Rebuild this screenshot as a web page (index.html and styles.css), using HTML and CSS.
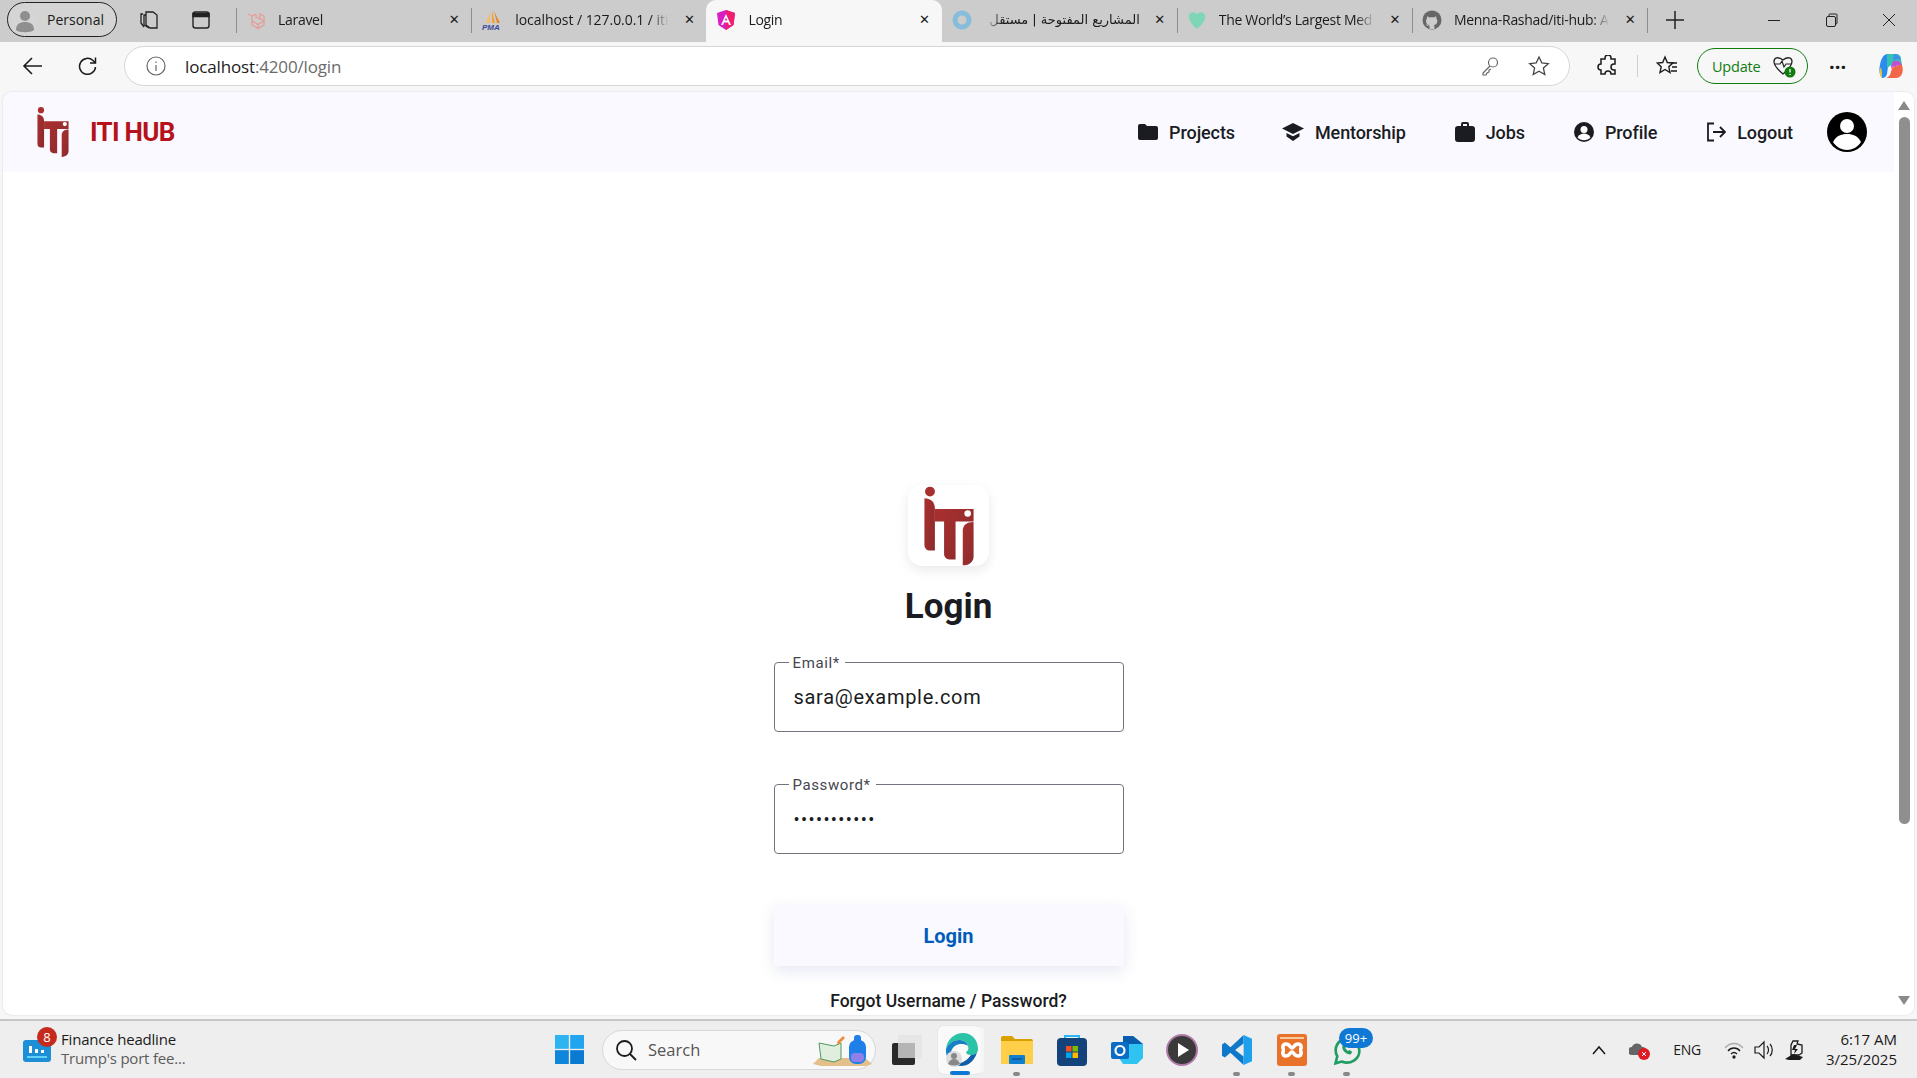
FILE: index.html

```html
<!DOCTYPE html>
<html lang="en">
<head>
  <meta charset="UTF-8" />
  <title>Login</title>
  <link rel="stylesheet" href="styles.css">
</head>
<body>

  <svg class="defs" width="0" height="0">
    <defs>
      <linearGradient id="rojo" x1="0" y1="0" x2="1" y2="1">
        <stop offset="0" stop-color="#a9302f"/>
        <stop offset="1" stop-color="#8c2a2c"/>
      </linearGradient>
      <symbol id="logo" viewBox="0 0 164 244">
        <circle cx="24" cy="17" r="15" fill="#a8302f"/>
        <path d="M7 37c18 0 32 10 32 33v127H24c-10 0-17-8-17-18z" fill="url(#rojo)"/>
        <path d="M39 70h118v38h-55v116H84c-10 0-17-7-17-17V108H39z" fill="url(#rojo)"/>
        <circle cx="139" cy="84" r="10" fill="#fff"/>
        <path d="M157 110v104c0 16-12 28-33 28V136c0-16 12-26 33-26z" fill="url(#rojo)"/>
      </symbol>
    </defs>
  </svg>

  <!-- PESTAÑAS -->
  <div class="tabbar">
    <div class="profile">
      <svg width="26" height="26" viewBox="0 0 26 26"><circle cx="13" cy="13" r="13" fill="#d5d5d5"/><circle cx="13" cy="9" r="5" fill="#8f8f8f"/><path d="M4 23c0-6 4-8 9-8s9 2 9 8c-3 3-15 3-18 0z" fill="#8f8f8f"/></svg>
      <span>Personal</span>
    </div>
    <div class="tool-icon first">
      <svg width="22" height="22" viewBox="0 0 22 22" fill="none" stroke="#222" stroke-width="1.3"><path d="M8 3h7l4 3v13h-7l-4-3z"/><path d="M8 6H6v10l5 3"/><path d="M5 5H3v9l3 4"/></svg>
    </div>
    <div class="tool-icon last">
      <svg width="20" height="20" viewBox="0 0 20 20" fill="none" stroke="#222" stroke-width="1.4"><rect x="2" y="2" width="16" height="16" rx="2.5"/><path d="M2 3.5h16v3H2z" fill="#222"/></svg>
    </div>

    <div class="tab sep">
      <svg class="fav" width="20" height="20" viewBox="0 0 20 20" fill="none" stroke="#e79a94" stroke-width="1.2"><path d="M2 4l4 2v9l6 3.5 6-3.500v-4l-6 3.500-6-3.500M6 6l4-2M12 18.500v-4M14 4l4 2v5l-4-2V4zM14 9l-4-2V4"/></svg>
      <span class="tab-title">Laravel</span>
      <span class="tab-x">✕</span>
    </div>
    <div class="tab sep">
      <svg class="fav" width="22" height="22" viewBox="0 0 22 22"><path d="M11 1l3 13h-3z" fill="#f2a23a"/><path d="M9 3L5 14h4z" fill="#f6bd6a"/><path d="M13 2l6 12h-3z" fill="#e9862a"/><text class="pma" x="1" y="21">PMA</text></svg>
      <span class="tab-title wide">localhost / 127.0.0.1 / iti</span>
      <span class="tab-x">✕</span>
    </div>
    <div class="tab active">
      <svg class="fav" width="20" height="22" viewBox="0 0 20 22"><path d="M10 1l9 3-1.500 12L10 21l-7.500-5L1 4z" fill="#d91fc3"/><path d="M10 1l9 3-1.500 12L10 21z" fill="#f0206e"/><path d="M10 5l5 11h-2l-1-2.500H8L7 16H5zM8.800 11.500h2.400L10 8.500z" fill="#fff"/></svg>
      <span class="tab-title">Login</span>
      <span class="tab-x">✕</span>
    </div>
    <div class="tab sep no-line">
      <svg class="fav" width="20" height="20" viewBox="0 0 20 20"><circle cx="10" cy="10" r="7" fill="none" stroke="#86bcdc" stroke-width="5"/></svg>
      <span class="tab-title rtl" dir="rtl">المشاريع المفتوحة | مستقل</span>
      <span class="tab-x">✕</span>
    </div>
    <div class="tab sep">
      <svg class="fav" width="20" height="20" viewBox="0 0 20 20"><path d="M10 19C4 14 1 9 2 5c1-3 5-4 8-1 3-3 7-2 8 1 1 4-2 9-8 14z" fill="#7fd6b7"/></svg>
      <span class="tab-title">The World’s Largest Med</span>
      <span class="tab-x">✕</span>
    </div>
    <div class="tab sep">
      <svg class="fav" width="20" height="20" viewBox="0 0 20 20"><circle cx="10" cy="10" r="9.500" fill="#666"/><path d="M7.500 19v-3c-2.500.5-3-1-3.500-2 1 0 1.500 1 2 1.500.7.600 1.200 0 1.500-.5-2-.3-3.500-1.300-3.500-4 0-1 .4-1.800 1-2.400-.2-.6-.2-1.400.1-2.100 1 0 1.800.6 2.300 1 1.500-.4 3-.4 4.500 0 .6-.4 1.300-1 2.300-1 .3.700.3 1.500.1 2.100.6.600 1 1.400 1 2.400 0 2.700-1.500 3.700-3.500 4 .4.500.6 1 .6 1.700V19z" fill="#ccc"/></svg>
      <span class="tab-title">Menna-Rashad/iti-hub: A</span>
      <span class="tab-x">✕</span>
    </div>
    <div class="new-tab sep">
      <svg width="18" height="18" viewBox="0 0 18 18" stroke="#222" stroke-width="1.500"><path d="M9 0v18M0 9h18"/></svg>
    </div>
    <div class="win-btns">
      <svg width="14" height="14" viewBox="0 0 14 14" stroke="#222"><path d="M1 7.500h12"/></svg>
      <svg width="14" height="14" viewBox="0 0 14 14" fill="none" stroke="#222"><rect x="1.500" y="3.500" width="9" height="10" rx="1.500"/><path d="M4 3.500V2q0-1 1-1h6q1 0 1 1v8q0 1-1 1h-.5"/></svg>
      <svg width="14" height="14" viewBox="0 0 14 14" stroke="#222"><path d="M1 1l12 12M13 1L1 13"/></svg>
    </div>
  </div>

  <!-- BARRA DE DIRECCIONES -->
  <div class="toolbar">
    <svg class="btn-back" width="22" height="22" viewBox="0 0 22 22" fill="none" stroke="#1b1b1b" stroke-width="1.600"><path d="M20 11H2M10 3l-8 8 8 8"/></svg>
    <svg class="btn-reload" width="22" height="22" viewBox="0 0 22 22" fill="none" stroke="#1b1b1b" stroke-width="1.500"><path d="M18.500 12a8 8 0 1 1-2.500-6.500l2.500 2.500"/><path d="M18.500 2.500V8H13"/></svg>
    <div class="address">
      <svg class="info" width="20" height="20" viewBox="0 0 20 20" fill="none" stroke="#666" stroke-width="1.200"><circle cx="10" cy="10" r="9"/><path d="M10 9v6M10 5.500v1.500"/></svg>
      <span class="url">localhost<span class="url-dim">:4200/login</span></span>
      <span class="spacer"></span>
      <svg width="20" height="20" viewBox="0 0 20 20" fill="none" stroke="#666" stroke-width="1.200"><circle cx="13" cy="6.500" r="4.500"/><path d="M10 10l-7 7v2h3l1-2 2-1v-2l2-1"/></svg>
      <svg width="22" height="22" viewBox="0 0 22 22" fill="none" stroke="#444" stroke-width="1.300"><path d="M11 2l2.800 6 6.500.7-4.900 4.400 1.400 6.400-5.800-3.300-5.800 3.300 1.400-6.400L1.700 8.700 8.200 8z"/></svg>
    </div>
    <svg class="tb-ext" width="22" height="22" viewBox="0 0 22 22" fill="none" stroke="#1b1b1b" stroke-width="1.500"><path d="M8 3a3 3 0 0 1 6 0v1h4v5h-1a3 3 0 0 0 0 6h1v4h-4a3 3 0 0 0-6 0H4v-4a3 3 0 0 1 0-6V4h4z"/></svg>
    <span class="tb-divider"></span>
    <svg class="tb-fav" width="22" height="22" viewBox="0 0 22 22" fill="none" stroke="#1b1b1b" stroke-width="1.400"><path d="M9 2l2.300 5.500 5.500.5-4 3.800 1.200 5.700L9 14.500l-5 3 1.200-5.700-4-3.800 5.500-.5z"/><path d="M15 8h6M16 12h5M15 16h6"/></svg>
    <div class="update">
      <span>Update</span>
      <svg width="24" height="24" viewBox="0 0 24 24" fill="none"><path d="M11 20C5 15 2 11 2 7.500 2 4 6 2 11 6c5-4 9-2 9 1.500S17 15 11 20z" stroke="#222" stroke-width="1.300"/><path d="M3 10h5l2-3 2 6 2-3h5" stroke="#222" stroke-width="1.200"/><circle cx="18" cy="18" r="5.500" fill="#107c10"/><path d="M18 15v3.500M18 20v1" stroke="#fff" stroke-width="1.300"/></svg>
    </div>
    <span class="tb-dots">···</span>
    <svg class="tb-copilot" width="28" height="28" viewBox="0 0 28 28"><path d="M9 2h8c-4 2-6 6-7 13l-1 7c-1 3-3 4-5 4-3-4-3-9-2-13C3 7 5 3 9 2z" fill="#2a8cf0"/><path d="M3 15c1 4 1 7 1 11-3-4-3-7-1-11z" fill="#e9c93a"/><path d="M9 2h9c3 0 5 2 5 5l1 6h-8c-4 0-6 2-7 4z" fill="#35c2b0"/><path d="M24 13c2 6 0 13-6 13H6c4 0 6-2 7-6 1-5 3-7 11-7z" fill="#f2674a"/><path d="M16 9c4-1 6 0 8 4-4 0-9 1-11 4 0-4 1-7 3-8z" fill="#c24fd6"/><path d="M16 2c3 0 6 2 7 6-3-2-6-1-8 1z" fill="#3f8ef2"/></svg>
  </div>

  <!-- PÁGINA -->
  <div class="viewport">
    <div class="page">
      <nav class="navbar">
        <div class="brand">
          <svg class="brand-logo" width="34" height="52"><use href="#logo"/></svg>
          <span class="brand-name">ITI HUB</span>
        </div>
        <div class="nav-links">
          <a class="nav-item">
            <svg width="20" height="16" viewBox="0 0 20 16" fill="#1a1c22"><path d="M0 2Q0 0 2 0h5l2 2h9q2 0 2 2v10q0 2-2 2H2q-2 0-2-2z"/></svg>
            Projects
          </a>
          <a class="nav-item">
            <svg width="22" height="18" viewBox="0 0 22 18" fill="#1a1c22"><path d="M11 0l11 5.500L11 11 0 5.500z"/><path d="M4.500 10v3.500l6.500 4.500 6.500-4.500V10L11 13.300z"/></svg>
            Mentorship
          </a>
          <a class="nav-item">
            <svg width="20" height="20" viewBox="0 0 20 20" fill="#1a1c22"><path d="M6 4V2q0-2 2-2h4q2 0 2 2v2h3q3 0 3 3v10q0 3-3 3H3q-3 0-3-3V7q0-3 3-3zm2 0h4V2H8z"/></svg>
            Jobs
          </a>
          <a class="nav-item">
            <svg width="20" height="20" viewBox="0 0 20 20"><circle cx="10" cy="10" r="10" fill="#1a1c22"/><circle cx="10" cy="7.500" r="3.500" fill="#fff"/><path d="M3.500 15.500c1.500-3 4-4 6.500-4s5 1 6.500 4c-3.500 3.500-9.500 3.500-13 0z" fill="#fff"/></svg>
            Profile
          </a>
          <a class="nav-item">
            <svg width="20" height="20" viewBox="0 0 20 20" fill="none" stroke="#1a1c22" stroke-width="1.800"><path d="M8 1.500H2v17h6M7 10h12M14 5l5 5-5 5"/></svg>
            Logout
          </a>
          <svg class="avatar" width="40" height="40" viewBox="0 0 40 40"><circle cx="20" cy="20" r="20" fill="#000"/><circle cx="20" cy="14" r="7" fill="#fff"/><path d="M6 30c3-6 8-8 14-8s11 2 14 8c-3 5-9 8-14 8s-11-3-14-8z" fill="#fff"/></svg>
        </div>
      </nav>

      <main class="login">
        <div class="logo-card">
          <svg width="54" height="80"><use href="#logo"/></svg>
        </div>
        <h1>Login</h1>
        <fieldset class="field">
          <legend>Email*</legend>
          <div class="field-value">sara@example.com</div>
        </fieldset>
        <fieldset class="field">
          <legend>Password*</legend>
          <div class="field-value dots">•••••••••••</div>
        </fieldset>
        <button class="login-btn">Login</button>
        <a class="forgot">Forgot Username / Password?</a>
      </main>
    </div>
    <div class="scrollbar">
      <span class="arrow-up"></span>
      <span class="thumb"></span>
      <span class="arrow-down"></span>
    </div>
  </div>

  <!-- BARRA DE TAREAS -->
  <div class="taskbar">
    <div class="news">
      <div class="news-icon">
        <svg width="28" height="26" viewBox="0 0 28 26"><rect y="4" width="28" height="22" rx="3" fill="#1d8fd6"/><path d="M6 10h3v7H6zM12 13h3v4h-3zM18 14h3v3h-3z" fill="#fff"/><path d="M4 20h20v2H4z" fill="#63d0f5"/></svg>
        <span class="news-badge">8</span>
      </div>
      <div class="news-text">
        <div class="news-title">Finance headline</div>
        <div class="news-sub">Trump's port fee...</div>
      </div>
    </div>

    <div class="task-center">
      <svg class="win" width="29" height="29" viewBox="0 0 30 30"><path d="M0 0h14.300v14.300H0z" fill="#2fb4f2"/><path d="M15.700 0H30v14.300H15.700z" fill="#22a5ee"/><path d="M0 15.700h14.300V30H0z" fill="#0f86da"/><path d="M15.700 15.700H30V30H15.700z" fill="#0b7bd2"/></svg>
      <div class="search">
        <svg width="22" height="22" viewBox="0 0 22 22" fill="none" stroke="#1b1b1b" stroke-width="1.800"><circle cx="9.500" cy="9.500" r="7.500"/><path d="M15 15l6 6"/></svg>
        <span>Search</span>
        <svg class="search-art" width="60" height="32" viewBox="0 0 60 32"><path d="M0 30l6-6h46l7 6-6 2H8z" fill="#e3bf8a"/><path d="M6 9l15 3 7-3v16l-7 3-13-3z" fill="#dfeedd" stroke="#4f9a5f"/><path d="M24 8l6-6 2 2-7 7z" fill="#f08a3c"/><rect x="36" y="6" width="17" height="24" rx="7" fill="#1e7fe8"/><rect x="41" y="1" width="7" height="8" rx="3" fill="#1e7fe8"/><rect x="38" y="19" width="13" height="9" rx="4" fill="#8f7fe8"/></svg>
      </div>
      <div class="task-app">
        <svg width="34" height="34" viewBox="0 0 34 34"><rect x="8" y="2" width="24" height="24" rx="1" fill="#e6e6e6"/><rect x="2" y="10" width="23" height="22" rx="2" fill="#2a2a2a"/><rect x="8" y="10" width="17" height="15" fill="#b5b5b5"/></svg>
      </div>
      <div class="task-app app-active">
        <svg width="34" height="34" viewBox="0 0 34 34"><path d="M1 16C2 6 10 0 18 0c9 0 15 7 15 16 0 4-3 6-7 6-3 0-5-1-5-3 2-1 3-3 2-6-1-4-5-6-9-6C8 7 3 11 1 16z" fill="#2bc3a8"/><path d="M1 16c2-5 7-9 13-9 4 0 8 2 9 6-6-4-15-2-17 6-1 6 3 12 10 14C7 32 0 25 1 16z" fill="#1680c4"/><path d="M26 22c3 0 5-1 6-3-2 8-8 14-16 14-4 0-7-2-9-4 5 2 13 2 19-7z" fill="#0f5fa8"/><circle cx="9" cy="26" r="8" fill="#ddd"/><circle cx="9" cy="23" r="3" fill="#888"/><path d="M3 31c1-3 3-5 6-5s5 2 6 5q-6 3-12 0z" fill="#888"/></svg>
        <span class="app-bar"></span>
      </div>
      <div class="task-app has-dot">
        <svg width="32" height="28" viewBox="0 0 32 28"><path d="M0 2q0-2 2-2h9l3 3h16q2 0 2 2v21q0 2-2 2H2q-2 0-2-2z" fill="#d9a000"/><path d="M0 5h32v21q0 2-2 2H2q-2 0-2-2z" fill="#ffcf4a"/><rect x="8" y="19" width="16" height="9" rx="1" fill="#0f7fd0"/><path d="M11 23h10" stroke="#063f73"/></svg>
      </div>
      <div class="task-app">
        <svg width="30" height="32" viewBox="0 0 30 32"><path d="M8 4V2h14v2" fill="none" stroke="#29b6f6" stroke-width="2"/><rect y="4" width="30" height="28" rx="4" fill="#14427a"/><path d="M9 12h5.500v5.500H9z" fill="#f25022"/><path d="M15.500 12H21v5.500h-5.500z" fill="#7fba00"/><path d="M9 18.500h5.500V24H9z" fill="#00a4ef"/><path d="M15.500 18.500H21V24h-5.500z" fill="#ffb900"/></svg>
      </div>
      <div class="task-app">
        <svg width="32" height="28" viewBox="0 0 32 28"><path d="M8 8l14-8 10 8v14l-6 6H12l-4-6z" fill="#2fc3f2"/><path d="M12 0h10l10 8H12z" fill="#0a5cad"/><rect y="6" width="18" height="17" rx="2" fill="#0a6cc4"/><circle cx="9" cy="14.500" r="4.500" fill="none" stroke="#fff" stroke-width="2.200"/></svg>
      </div>
      <div class="task-app">
        <svg width="32" height="32" viewBox="0 0 32 32"><circle cx="16" cy="16" r="15" fill="#3a3a3a" stroke="#b07aa8" stroke-width="2"/><path d="M12 9l11 7-11 7z" fill="#fff"/></svg>
      </div>
      <div class="task-app has-dot">
        <svg width="30" height="30" viewBox="0 0 32 32"><path d="M23 0L9 13 3 8 0 10v12l3 2 6-5 14 13z" fill="#0f78c8"/><path d="M23 0l9 4v24l-9 4z" fill="#1fa0ec"/><path d="M23 9v14l-9-7z" fill="#eeeeee"/></svg>
      </div>
      <div class="task-app has-dot">
        <svg width="30" height="32" viewBox="0 0 30 32"><rect width="30" height="32" rx="3" fill="#e8722a"/><rect x="3" y="3" width="24" height="2" fill="#f8c9a0"/><path d="M9 10c4 0 4 4 6 4s2-4 6-4 4 6 1 6c3 0 3 6-1 6s-4-4-6-4-2 4-6 4-4-6-1-6c-3 0-3-6 1-6z" fill="none" stroke="#fff" stroke-width="3.600"/></svg>
      </div>
      <div class="task-app has-dot">
        <svg class="wa-icon" width="30" height="30" viewBox="0 0 32 34" fill="none"><path d="M3 31l2-8C0 14 6 3 16 3c9 0 14 7 14 14 0 9-10 16-20 12z" stroke="#1f9d63" stroke-width="3"/><path d="M11 11c-2 3 3 10 9 10l2-3-3-2-2 1-3-3 1-2-2-3z" fill="#1f9d63"/></svg>
        <span class="wa-badge">99+</span>
      </div>
    </div>

    <div class="tray">
      <svg width="14" height="10" viewBox="0 0 14 10" fill="none" stroke="#1b1b1b" stroke-width="1.500"><path d="M1 9l6-7 6 7"/></svg>
      <svg class="tray-cloud" width="22" height="22" viewBox="0 0 22 22"><path d="M3 16a4 4 0 0 1 0-8c1-4 8-5 10 0 3 0 5 2 5 5l-3 3z" fill="#666"/><circle cx="15" cy="15" r="6" fill="#e01b24"/><path d="M13 13l4 4M17 13l-4 4" stroke="#fff"/></svg>
      <span class="lang">ENG</span>
      <svg width="20" height="18" viewBox="0 0 20 18" fill="none" stroke="#1b1b1b" stroke-width="1.300"><path d="M1 7c5-6 13-6 18 0" stroke="#aaa"/><path d="M4 10c3-4 9-4 12 0M7 13c2-2 4-2 6 0"/><circle cx="10" cy="16" r="1" fill="#1b1b1b"/></svg>
      <svg width="22" height="20" viewBox="0 0 22 20" fill="none" stroke="#1b1b1b" stroke-width="1.200"><path d="M2 7h4l5-5v16l-5-5H2z"/><path d="M14 6c2 2 2 6 0 8M17 4c3 3 3 9 0 12"/></svg>
      <svg width="22" height="22" viewBox="0 0 22 22"><path d="M9 2h5l-1 3 5 1v8l-3 2H7V6z" fill="none" stroke="#1b1b1b" stroke-width="1.300"/><path d="M1 20l8-5 10 3-3 3H5z" fill="#1b1b1b"/><path d="M10 6l3 0-2 4h3l-4 5 1-4H8z" fill="#1b1b1b"/></svg>
      <div class="clock">
        <div>6:17 AM</div>
        <div>3/25/2025</div>
      </div>
    </div>
  </div>

</body>
</html>
```

FILE: styles.css

```css
* {
  box-sizing: border-box;
}
html, body {
  margin: 0;
  height: 100%;
  overflow: hidden;
}
body {
  width: 1917px;
  height: 1078px;
  display: flex;
  flex-direction: column;
  background: #f7f7f7;
  font-family: 'Open Sans', sans-serif;
  color: #1b1b1b;
}
svg {
  flex-shrink: 0;
}
.defs {
  position: absolute;
}

/* pestañas */
.tabbar {
  height: 42px;
  display: flex;
  align-items: center;
  background: #cccccc;
  font-size: 14px;
}
.profile {
  width: 110px;
  height: 35px;
  margin: 0 0 3px 7px;
  padding-left: 4px;
  display: flex;
  align-items: center;
  gap: 9px;
  border: 1.500px solid #222;
  border-radius: 18px;
  background: #d4d4d4;
}
.tool-icon {
  width: 52px;
  margin-bottom: 3px;
  display: flex;
  justify-content: center;
}
.tool-icon.first {
  margin-left: 6px;
}
.tool-icon.last {
  margin-right: 9px;
}
.tab {
  width: 235.200px;
  height: 42px;
  padding: 0 9px 3px 10px;
  display: flex;
  align-items: center;
  gap: 12px;
  position: relative;
}
.tab.sep::before, .new-tab.sep::before {
  content: "";
  position: absolute;
  left: 0;
  top: 8px;
  height: 25px;
  border-left: 1.500px solid #8d8d8d;
}
.tab.no-line::before {
  display: none;
}
.tab.active {
  background: #f7f7f7;
  border-radius: 10px 10px 0 0;
}
.tab-title {
  flex: 1;
  overflow: hidden;
  white-space: nowrap;
  letter-spacing: -0.3px;
  -webkit-mask-image: linear-gradient(90deg, #000 88%, transparent);
  mask-image: linear-gradient(90deg, #000 88%, transparent);
}
.tab-title.wide {
  letter-spacing: -0.05px;
}
.tab-title.rtl {
  font-family: 'DejaVu Sans', sans-serif;
  font-size: 13px;
  -webkit-mask-image: linear-gradient(270deg, #000 88%, transparent);
  mask-image: linear-gradient(270deg, #000 88%, transparent);
}
.tab-x {
  width: 16px;
  text-align: center;
  font-size: 13px;
  font-family: 'DejaVu Sans', sans-serif;
}
.pma {
  font-family: 'Liberation Sans', sans-serif;
  font-size: 8px;
  font-weight: 700;
  font-style: italic;
  fill: #3b4a9c;
}
.new-tab {
  width: 46px;
  height: 42px;
  padding: 0 0 3px 19px;
  display: flex;
  align-items: center;
  position: relative;
}
.win-btns {
  margin: 0 0 3px auto;
  width: 150px;
  padding-right: 21px;
  display: flex;
  justify-content: space-between;
}

/* barra de direcciones */
.toolbar {
  height: 50px;
  padding-bottom: 2px;
  display: flex;
  align-items: center;
  background: #f7f7f7;
}
.btn-back {
  margin-left: 22px;
}
.btn-reload {
  margin-left: 33px;
}
.address {
  width: 1446px;
  height: 40px;
  margin-left: 25px;
  padding: 0 19px 0 21px;
  display: flex;
  align-items: center;
  gap: 28px;
  background: #fff;
  border: 1.500px solid #d6d6d6;
  border-radius: 20px;
}
.url {
  margin-left: -9px;
  font-size: 17px;
  letter-spacing: -0.15px;
}
.url-dim {
  color: #6b6b6b;
}
.spacer {
  flex: 1;
}
.tb-ext {
  margin-left: 27px;
}
.tb-divider {
  height: 22px;
  margin-left: 18px;
  border-left: 1px solid #cfcfcf;
}
.tb-fav {
  margin-left: 18px;
}
.update {
  width: 111px;
  height: 36px;
  margin-left: 19px;
  padding: 0 0 0 14px;
  display: flex;
  align-items: center;
  gap: 12px;
  border: 1.500px solid #107c10;
  border-radius: 18px;
  color: #107c10;
  font-size: 14.500px;
  letter-spacing: -0.2px;
}
.tb-dots {
  margin-left: 21px;
  font-size: 20px;
  font-weight: 700;
}
.tb-copilot {
  margin-left: 32px;
}

/* página */
.viewport {
  height: 923px;
  margin: 0 3px 4px 3px;
  display: flex;
  background: #fff;
  border-radius: 9px;
  box-shadow: 0 0 2px #cfcfcf;
  overflow: hidden;
}
.page {
  flex: 1;
  min-width: 0;
  overflow: hidden;
  font-family: Roboto, sans-serif;
}
.scrollbar {
  width: 20px;
  padding: 9px 3px;
  display: flex;
  flex-direction: column;
  align-items: center;
  background: #fff;
}
.arrow-up {
  border: 6px solid transparent;
  border-top: 0;
  border-bottom: 9px solid #8a8a8a;
}
.arrow-down {
  margin-top: 10px;
  border: 6px solid transparent;
  border-bottom: 0;
  border-top: 9px solid #8a8a8a;
}
.thumb {
  width: 11px;
  height: 707px;
  margin-top: 7px;
  margin-bottom: 162px;
  background: #8f8f8f;
  border-radius: 6px;
}
.navbar {
  height: 80px;
  padding: 0 27px 0 33px;
  display: flex;
  align-items: center;
  justify-content: space-between;
  background: #f9f9ff;
}
.brand {
  display: flex;
  align-items: center;
  gap: 20px;
}
.brand-name {
  color: #b5121b;
  font-size: 26px;
  font-weight: 700;
  letter-spacing: -0.7px;
}
.nav-links {
  display: flex;
  align-items: center;
}
.nav-item {
  margin-right: 49px;
  display: flex;
  align-items: center;
  gap: 11px;
  font-size: 18px;
  font-weight: 500;
  color: #1a1c22;
  letter-spacing: -0.1px;
}
.nav-item:first-child {
  margin-right: 47px;
}
.avatar {
  margin-left: -15px;
}

.login {
  padding-top: 313px;
  display: flex;
  flex-direction: column;
  align-items: center;
  color: #1a1c22;
}
.logo-card {
  width: 81px;
  height: 81px;
  display: flex;
  align-items: center;
  justify-content: center;
  background: #fff;
  border-radius: 14px;
  box-shadow: 0 4px 12px rgba(0, 0, 0, 0.09);
}
.login h1 {
  margin: 20px 0 0;
  font-size: 35px;
  line-height: 42px;
  font-weight: 700;
}
.field {
  width: 350px;
  height: 78px;
  margin: 26px 0 0;
  padding: 0 0 0 18px;
  border: 1px solid #74747e;
  border-radius: 4px;
}
.field + .field {
  margin-top: 44px;
}
.field legend {
  margin-left: -4px;
  padding: 0 5px 0 4px;
  height: 16px;
  line-height: 18px;
  font-size: 15px;
  letter-spacing: 0.6px;
  color: #46464f;
}
.field-value {
  height: 60px;
  padding-left: 1px;
  line-height: 55px;
  font-size: 20px;
  letter-spacing: 0.7px;
}
.field-value.dots {
  line-height: 56px;
  font-size: 18px;
  letter-spacing: 1.4px;
}
.login-btn {
  width: 350px;
  height: 61px;
  margin-top: 51px;
  border: none;
  border-radius: 2px;
  background: #f9f9ff;
  color: #005cbb;
  font-family: Roboto, sans-serif;
  font-size: 20px;
  font-weight: 700;
  box-shadow: 0 5px 16px rgba(60, 80, 160, 0.13);
}
.forgot {
  margin-top: 25px;
  font-size: 17.500px;
  font-weight: 500;
}

/* barra de tareas */
.taskbar {
  height: 59px;
  padding-left: 23px;
  display: flex;
  align-items: center;
  background: #eeeeee;
  border-top: 2px solid #c6c6c6;
  position: relative;
}
.news {
  width: 529px;
  display: flex;
  align-items: center;
  gap: 10px;
}
.news-icon {
  position: relative;
  padding-top: 4px;
}
.news-badge {
  position: absolute;
  left: 14px;
  top: -5px;
  width: 20px;
  height: 20px;
  background: #c42b1c;
  border-radius: 50%;
  color: #fff;
  font-size: 13px;
  line-height: 20px;
  text-align: center;
}
.news-text {
  margin-top: -2px;
}
.news-title {
  font-size: 15px;
  letter-spacing: -0.2px;
  line-height: 19px;
}
.news-sub {
  font-size: 15px;
  letter-spacing: -0.2px;
  line-height: 19px;
  color: #5c5c5c;
}
.task-center {
  display: flex;
  align-items: center;
}
.win {
  margin-left: 3px;
}
.search {
  width: 274px;
  height: 40px;
  margin: 0 3px 0 18px;
  padding: 0 2px 0 12px;
  display: flex;
  align-items: center;
  gap: 11px;
  background: #f8f8f8;
  border: 1px solid #d8d8d8;
  border-radius: 20px;
  font-size: 16.500px;
  color: #555;
}
.search-art {
  margin-left: auto;
}
.task-app {
  width: 55px;
  height: 54px;
  display: flex;
  align-items: center;
  justify-content: center;
  position: relative;
}
.task-app svg {
  position: relative;
}
.app-active::before {
  content: "";
  position: absolute;
  left: 4px;
  top: 3px;
  width: 43px;
  height: 48px;
  background: #f9f9f9;
  border-radius: 5px;
  box-shadow: 4px 0 0 -1px #f5f5f5, 0 0 1px #bbb;
}
.app-bar {
  position: absolute;
  left: 16px;
  bottom: 2px;
  width: 20px;
  height: 4px;
  background: #0f78d4;
  border-radius: 2px;
}
.has-dot::after {
  content: "";
  position: absolute;
  left: 24px;
  bottom: 1px;
  width: 7px;
  height: 4px;
  background: #888;
  border-radius: 2px;
}
.wa-icon {
  margin-top: 2px;
}
.wa-badge {
  position: absolute;
  left: 20px;
  top: 5px;
  width: 34px;
  height: 20px;
  background: #0f78d4;
  border-radius: 10px;
  color: #fff;
  font-size: 13px;
  line-height: 20px;
  text-align: center;
}
.tray {
  margin-left: auto;
  padding-right: 20px;
  display: flex;
  align-items: center;
  gap: 9px;
}
.tray-cloud {
  margin-left: 14px;
}
.lang {
  margin: 0 14px 0 13px;
  font-size: 14px;
  letter-spacing: -0.3px;
}
.clock {
  margin: -2px 0 0 11px;
  text-align: right;
  font-size: 15px;
  line-height: 20px;
}
```
